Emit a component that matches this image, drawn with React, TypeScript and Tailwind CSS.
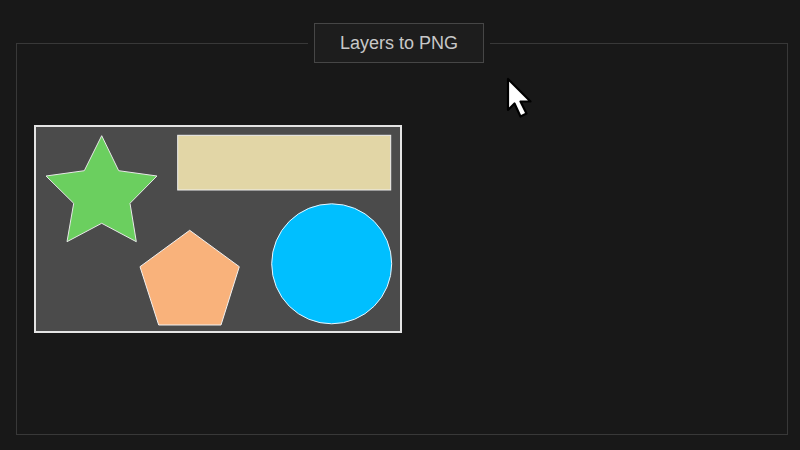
import React from "react";

export default function App() {
  return (
    <div
      className="relative w-[800px] h-[450px] bg-[#181818] pt-[23px] px-[16px] overflow-hidden"
      style={{ fontFamily: '"Liberation Sans", Arial, sans-serif' }}
    >
      <fieldset className="w-[772px] h-[412px] border border-[#383838] m-0 p-0">
        <legend className="ml-[291px] px-[6px]">
          <div className="h-[40px] w-[170px] flex items-center justify-center border border-[#464646] bg-[#1d1d1d] text-[18px] text-[#c8c8c8]">
            Layers to PNG
          </div>
        </legend>
        <div className="pl-[17px] pt-[62px]">
          <div className="w-[368px] h-[208px] border-2 border-[#e4e4e4] bg-[#4b4b4b]">
            <svg width="364" height="204" viewBox="36 127 364 204" className="block">
              <polygon
                points="101.7,135.7 118.7,170.7 157,176 130,203.3 136.3,241.7 101.7,223.3 67,241.7 73.7,203.3 46,176 84.3,170.7"
                fill="#6bcf5f"
                stroke="#e8e8e8"
                strokeWidth="1"
              />
              <rect x="177.7" y="135.3" width="213" height="54.7" fill="#e2d6a6" stroke="#eeeeee" strokeWidth="1" />
              <polygon
                points="189.7,230.3 239.3,266.7 221,325 158.7,325 140,266.7"
                fill="#f9b27b"
                stroke="#f2f2f2"
                strokeWidth="1"
              />
              <circle cx="331.7" cy="263.8" r="60" fill="#00bfff" stroke="#e8f6ff" strokeWidth="1" />
            </svg>
          </div>
        </div>
      </fieldset>
      <svg
        className="absolute left-[506px] top-[77px]"
        width="30"
        height="44"
        viewBox="0 0 30 44"
      >
        <path
          d="M2 2 L2 33 L8.5 26.5 L14.5 39.5 L20.5 36.5 L14.5 24.5 L24.5 24.5 Z"
          fill="#ffffff"
          stroke="#000000"
          strokeWidth="2.2"
          strokeLinejoin="round"
        />
      </svg>
    </div>
  );
}
